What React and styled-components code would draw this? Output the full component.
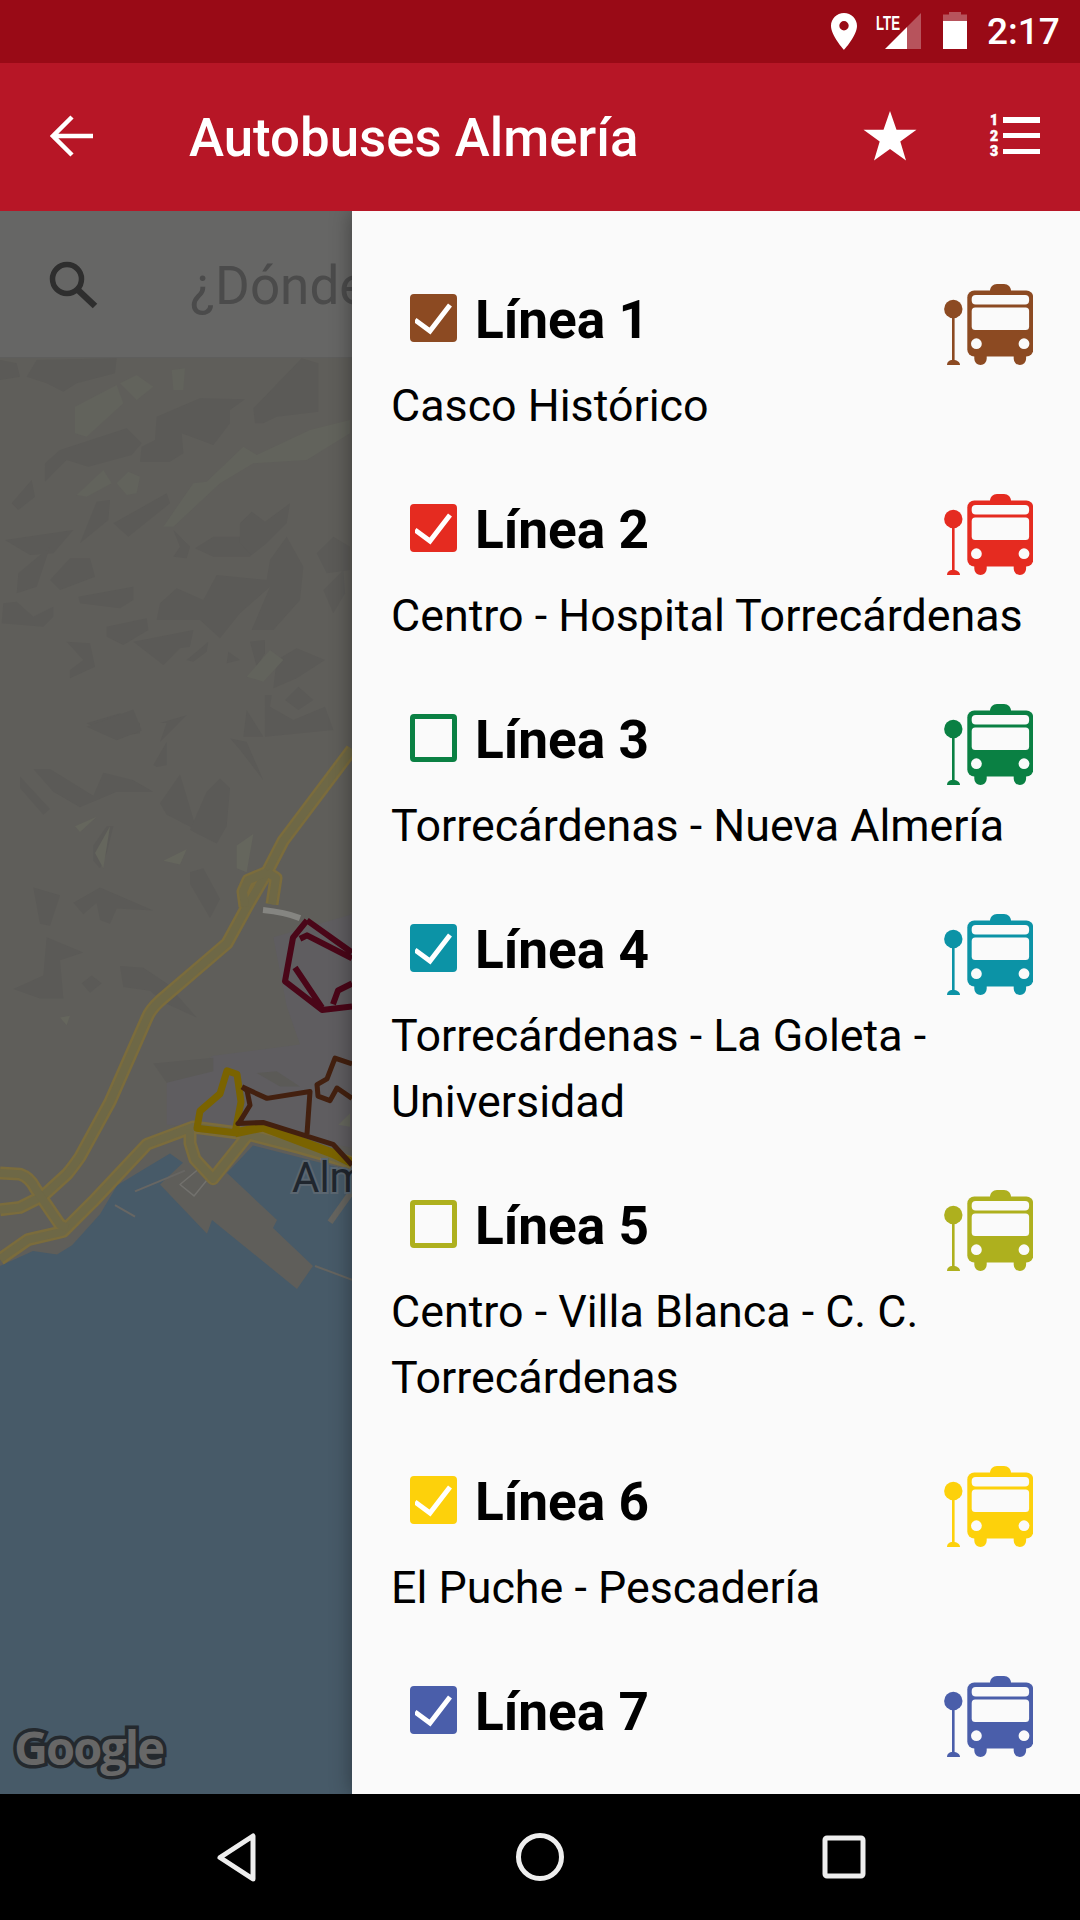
import React from "react";
import styled, { createGlobalStyle } from "styled-components";

const Global = createGlobalStyle`
  html, body { margin: 0; padding: 0; background: #000; }
  #root { width: 1080px; height: 1920px; overflow: hidden; }
  * { box-sizing: border-box; }
`;

const Screen = styled.div`
  width: 1080px;
  height: 1920px;
  display: flex;
  flex-direction: column;
  font-family: Roboto, "Liberation Sans", sans-serif;
  overflow: hidden;
`;

const StatusBar = styled.div`
  height: 63px;
  background: #990a16;
  display: flex;
  align-items: center;
  justify-content: flex-end;
  padding-right: 17px;
  color: #fff;
`;

const StatusIcons = styled.svg`
  width: 140px;
  height: 63px;
  display: block;
`;

const Clock = styled.span`
  margin-left: 16px;
  font-size: 37px;
  font-weight: 500;
  width: 76px;
`;

const AppBar = styled.header`
  height: 148px;
  background: #b71626;
  display: flex;
  align-items: center;
  color: #fff;
  position: relative;
  z-index: 3;
`;

const BackIcon = styled.svg`
  width: 44px;
  height: 44px;
  margin-left: 50px;
  margin-top: -2px;
  flex: none;
`;

const AppTitle = styled.h1`
  margin: 2px 0 0 95px;
  flex: 1;
  font-size: 52.8px;
  font-weight: 500;
  line-height: 1;
`;

const StarIcon = styled.svg`
  width: 54px;
  height: 50px;
  flex: none;
  margin-top: -2px;
`;

const ListIcon = styled.svg`
  width: 52px;
  height: 44px;
  margin: -2px 39px 0 72px;
  flex: none;
  overflow: visible;
`;

const Body = styled.main`
  flex: 1;
  min-height: 0;
  display: flex;
`;

const MapPane = styled.section`
  width: 352px;
  flex: none;
  display: flex;
  flex-direction: column;
  position: relative;
  overflow: hidden;
`;

const SearchBar = styled.div`
  height: 147px;
  flex: none;
  background: #666665;
  border-bottom: 1px solid #5e5e5d;
  display: flex;
  align-items: center;
  padding: 0 0 0 48px;
  white-space: nowrap;
`;

const SearchIcon = styled.svg`
  width: 50px;
  height: 50px;
  flex: none;
  margin-top: 2px;
`;

const SearchText = styled.span`
  margin-left: 92px;
  font-size: 53px;
  font-weight: 400;
  color: #4b4b4b;
  margin-top: 3px;
`;

const MapCanvas = styled.svg`
  flex: 1;
  min-height: 0;
  width: 352px;
  display: block;
`;

const GoogleMark = styled.span`
  position: absolute;
  left: 14px;
  bottom: 15px;
  font-family: "Open Sans", Roboto, sans-serif;
  font-size: 47px;
  font-weight: 700;
  letter-spacing: -2px;
  color: #676767;
  -webkit-text-stroke: 7px #24292e;
  paint-order: stroke fill;
`;

const Drawer = styled.aside`
  flex: 1;
  min-width: 0;
  background: #fafafa;
  padding-top: 45px;
  overflow: hidden;
  position: relative;
  z-index: 2;
  box-shadow: 0 0 20px rgba(0, 0, 0, 0.38);
`;

const LineRow = styled.article`
  padding: 28px 47px 27px 39px;
`;

const LineHead = styled.div`
  height: 89px;
  display: flex;
  align-items: flex-start;
  padding-left: 19px;
`;

const Box = styled.span`
  width: 47px;
  height: 48px;
  flex: none;
  margin-top: 10px;
  border-radius: 4px;
  border: 5px solid ${(p) => p.$color};
  background: ${(p) => (p.$checked ? p.$color : "transparent")};
  display: flex;
  align-items: center;
  justify-content: center;
`;

const CheckMark = styled.svg`
  width: 37px;
  height: 38px;
  display: block;
`;

const LineName = styled.h2`
  margin: 8px 0 0 18px;
  flex: 1;
  font-size: 53.2px;
  font-weight: 700;
  line-height: 56px;
  color: #000;
`;

const BusIcon = styled.svg`
  width: 89px;
  height: 81px;
  flex: none;
  color: ${(p) => p.$color};
`;

const LineDesc = styled.p`
  margin: 0;
  font-size: 44.8px;
  font-weight: 400;
  line-height: 66px;
  color: #000;
`;

const NavBar = styled.nav`
  height: 126px;
  flex: none;
  background: #000;
  display: flex;
  align-items: center;
  justify-content: center;
  gap: 244px;
`;

const NavIcon = styled.svg`
  width: 60px;
  height: 60px;
  flex: none;
`;

const Bus = ({ color }) => (
  <BusIcon $color={color} viewBox="24 14 89 81" aria-hidden="true">
    <g fill="currentColor">
      <circle cx="33.3" cy="39" r="9.2" />
      <rect x="32" y="46" width="2.6" height="46" />
      <path d="M27 95c0-3 2-5 6-5s7 2 7 5z" />
      <path d="M70 21c0-4 3-7 7-7h7c4 0 7 3 7 7z" />
      <rect x="47.3" y="20.5" width="66" height="66" rx="7" />
      <path d="M54.3 84h12.4v4.8a6.2 6.2 0 0 1-12.4 0zM93.7 84h12.4v4.8a6.2 6.2 0 0 1-12.4 0z" />
    </g>
    <g fill="#fafafa">
      <rect x="51.7" y="25" width="57.4" height="9.4" rx="4" />
      <rect x="51.7" y="37.4" width="57.4" height="22.6" rx="3.5" />
      <circle cx="56.4" cy="73.7" r="5.4" />
      <circle cx="104" cy="73.7" r="5.4" />
    </g>
  </BusIcon>
);

const DARK_A = [
  "0,60 50,70 60,110 0,120", "110,60 350,55 345,100 230,130 190,155 140,130 80,110",
  "470,230 600,175 735,178 690,210 690,250 640,315 545,280 550,340 510,365 420,365 425,320 465,300",
  "760,205 905,55 955,70 955,215 830,230 790,250 765,250", "135,425 135,370 180,330 380,265 425,310 395,345 265,380 200,360",
  "35,490 95,420 105,470 55,510", "240,610 290,485 330,480 325,540", "340,550 500,460 510,490 385,590",
  "15,600 220,570 160,640 90,645", "50,760 55,700 150,620 110,740", "150,720 210,655 270,655 285,710 180,750",
  "520,570 570,620 560,655 520,650 540,620", "585,625 640,590 720,590 790,600 750,650 640,650",
  "720,550 755,515 795,545 870,490 860,550 800,610 755,645 720,610",
  "470,840 480,790 530,745 610,780 650,705 800,720 810,660 860,590 910,680 900,780 820,870 755,870 810,740 720,820 660,895 600,840",
  "235,770 400,740 400,780 360,805 240,790", "5,850 10,790 50,785 100,830 160,800 160,830 130,860",
  "320,860 440,835 445,870 370,915 320,890", "400,905 580,870 570,920 540,925 490,975",
  "200,905 270,910 285,980 210,1015 210,990 250,960", "560,960 625,905 620,935 580,965", "680,970 685,935 720,960",
  "750,905 795,900 795,940 770,980", "820,1045 830,960 890,925 975,960 890,1015", "855,1080 895,1040 940,1080 895,1110",
  "795,1065 815,1065 810,1100 880,1140 975,1100 1000,1170 795,1190", "950,640 1000,590 1050,620 1050,690 980,700",
  "970,750 1030,690 1035,760 1000,820", "360,1120 420,1150 420,1180 340,1190 260,1150", "740,1110 790,1190 730,1190",
];
const LIGHT_A = [
  "225,200 350,135 370,190 260,290 225,280", "360,130 410,105 460,140 410,180", "515,90 555,85 550,150 520,150",
  "230,465 310,390 335,430 260,470", "350,430 385,395 420,410 410,460 380,465",
  "490,560 580,430 620,425 730,320 770,345 930,270 1050,240 1050,280 920,360 760,370 660,430 520,560",
  "740,1010 810,930 850,960 790,1025",
];
const DARK_B = [
  "260,70 400,25 425,80 350,105", "100,180 150,180 280,250 310,190 400,210 460,240 350,240 240,280 160,240",
  "60,200 150,285 130,300 60,230", "480,60 560,40 480,110 500,60", "460,170 500,110 500,170 470,175",
  "480,270 540,195 590,340 500,300", "620,240 660,205 690,230 680,330 650,375 570,340", "100,490 180,510 150,590 120,585",
  "140,620 250,660 180,680 190,780 120,780 40,755 130,720", "280,380 320,330 340,330 320,400 300,440 280,420",
  "300,490 460,550 350,545 330,585 300,575 290,530 250,560 220,530", "245,740 275,720 305,740 270,765",
  "360,695 430,700 500,740 590,830 490,790 450,760 370,750", "460,950 640,935 640,970 500,1000",
  "570,450 610,440 660,520 630,570 570,480", "690,100 740,110 790,210 720,130", "770,975 830,970 900,1010 840,1010",
];
const LIGHT_B = [
  "225,330 290,305 240,345", "285,400 330,330 310,440", "490,420 560,390 540,430", "710,380 760,350 740,450 710,440",
  "180,830 210,825 200,850", "1015,1110 1050,1080 1050,1115",
];

const ROADS = [
  "M352 743L283 823L267 850L247 880L227 912L160 962Q150 970 147 977L110 1050L80 1098Q72 1108 67 1113L43 1132L20 1142L0 1144",
  "M0 1187L28 1170L63 1163L93 1137L147 1087L193 1072L247 1078L300 1090L352 1103",
  "M0 1112L20 1113Q30 1116 35 1125L60 1157L68 1160",
  "M245 880L243 867L248 857L267 850M267 850L276 855L272 878",
  "M190 1074L190 1086L195 1100L213 1117L247 1080",
];

const Map = () => (
  <MapCanvas viewBox="0 358 352 1436" aria-hidden="true">
    <rect x="0" y="358" width="352" height="1436" fill="#5f5e5a" />
    <g transform="translate(0 340) scale(.33333)">
      {DARK_A.map((p) => <polygon key={p} points={p} fill="#5b5a57" />)}
      {LIGHT_A.map((p) => <polygon key={p} points={p} fill="#62635c" />)}
    </g>
    <g transform="translate(0 700) scale(.33333 .38265)">
      <polygon points="820,620 1056,560 1056,1170 760,1120 500,1110 500,1000 640,930 900,900 860,800" fill="#5f5d60" />
      {DARK_B.map((p) => <polygon key={p} points={p} fill="#5b5a57" />)}
      {LIGHT_B.map((p) => <polygon key={p} points={p} fill="#65665d" />)}
    </g>
    <g transform="translate(0 700) scale(1 1.148) translate(0 -700)">
      <polygon
        points="0,1193 33,1180 57,1183 72,1175 100,1148 117,1123 147,1107 170,1095 183,1103 160,1122 207,1165 212,1153 297,1213 313,1193 273,1160 277,1153 227,1112 253,1088 352,1110 352,1794 0,1794"
        fill="#475a68"
      />
      <g fill="none" strokeLinejoin="round">
        <path d="M135 1128L185 1110M115 1140L135 1150" stroke="#676663" strokeWidth="2" vectorEffect="non-scaling-stroke" />
        <path d="M330 1155L352 1128" stroke="#65645f" strokeWidth="6" vectorEffect="non-scaling-stroke" />
        <path d="M315 1193L352 1205" stroke="#65645f" strokeWidth="2" vectorEffect="non-scaling-stroke" />
        <path d="M180 1122L198 1109L208 1117L194 1132Z" stroke="#72716d" strokeWidth="1.5" vectorEffect="non-scaling-stroke" />
        <path d="M263 883Q285 885 300 890" stroke="#858581" strokeWidth="6" vectorEffect="non-scaling-stroke" />
        {ROADS.map((d) => <path key={d} d={d} stroke="#7b6c3c" strokeWidth="13" vectorEffect="non-scaling-stroke" />)}
        {ROADS.map((d) => <path key={d} d={d} stroke="#6e6846" strokeWidth="8" vectorEffect="non-scaling-stroke" />)}
        <path d="M307 892L352 920M307 892L293 907L285 945L322 970L352 967M300 908L307 905L352 925M295 933L322 968M333 965L338 953L352 947" stroke="#4a0618" strokeWidth="6" vectorEffect="non-scaling-stroke" />
        <path d="M235 1077L263 1072L333 1095L352 1103" stroke="#7a6300" strokeWidth="9" vectorEffect="non-scaling-stroke" />
        <path d="M227 1023L237 1026L241 1050L235 1077L197 1073L200 1058L220 1043Z" stroke="#7a6300" strokeWidth="7" vectorEffect="non-scaling-stroke" />
        <path d="M242 1037L267 1047L310 1041L307 1078M240 1067L250 1053L247 1040L242 1037M240 1067L238 1069L263 1068L333 1087L352 1105" stroke="#43200f" strokeWidth="5" vectorEffect="non-scaling-stroke" />
        <path d="M352 1017L335 1012L327 1030L317 1035L318 1045L330 1049L337 1038L352 1047" stroke="#43200f" strokeWidth="5" vectorEffect="non-scaling-stroke" />
      </g>
    </g>
    <text
      x="292" y="1192" fontFamily="Roboto, sans-serif" fontSize="42" fill="#20262e"
      stroke="#5b6670" strokeWidth="4" paintOrder="stroke fill"
    >Almería</text>
  </MapCanvas>
);

const LINES = [
  { n: 1, color: "#8c4a22", checked: true, desc: "Casco Histórico" },
  { n: 2, color: "#e52b20", checked: true, desc: "Centro - Hospital Torrecárdenas" },
  { n: 3, color: "#0a8043", checked: false, desc: "Torrecárdenas - Nueva Almería" },
  { n: 4, color: "#0c93a6", checked: true, desc: "Torrecárdenas - La Goleta - Universidad" },
  { n: 5, color: "#aeb01e", checked: false, desc: "Centro - Villa Blanca - C. C. Torrecárdenas" },
  { n: 6, color: "#fdd10b", checked: true, desc: "El Puche - Pescadería" },
  { n: 7, color: "#4a5eaa", checked: true, desc: "" },
];

export default function App() {
  return (
    <Screen>
      <Global />
      <StatusBar>
        <StatusIcons viewBox="0 0 140 63" aria-hidden="true">
          <path fillRule="evenodd" fill="#fff" d="M13 13c-7.200 0-13 5.800-13 13 0 9.500 13 24 13 24s13-14.500 13-24c0-7.200-5.800-13-13-13zm0 17.500a4.700 4.700 0 1 1 0-9.400 4.700 4.700 0 0 1 0 9.400z" />
          <text x="45" y="30" fill="#fff" fontFamily="'Liberation Sans', sans-serif" fontWeight="700" fontSize="20" textLength="24" lengthAdjust="spacingAndGlyphs">LTE</text>
          <path fill="#fff" d="M54 49L76 27V49Z" />
          <path fill="#fff" opacity=".3" d="M76 27L90 13V49H76Z" />
          <path fill="#fff" opacity=".3" d="M112 21V14.500h6V12h12v2.500h6V21Z" />
          <rect x="112" y="21" width="24" height="28" fill="#fff" />
        </StatusIcons>
        <Clock>2:17</Clock>
      </StatusBar>
      <AppBar>
        <BackIcon viewBox="0 0 44 44" aria-hidden="true">
          <path d="M43 22H4M22 3L3 22l19 19" fill="none" stroke="#fff" strokeWidth="4.500" />
        </BackIcon>
        <AppTitle>Autobuses Almería</AppTitle>
        <StarIcon viewBox="0 0 54 50" aria-hidden="true">
          <path fill="#fff" d="M27 0l6.500 18.800H53.500L37.300 30.500 43 49.500 27 38 11 49.500l5.700-19L.5 18.800h20z" />
        </StarIcon>
        <ListIcon viewBox="0 0 52 44" aria-hidden="true">
          <g fill="#fff">
            <rect x="14" y="3" width="37" height="6" />
            <rect x="14" y="19" width="37" height="5" />
            <rect x="14" y="35" width="37" height="5" />
            <g fontFamily="Roboto, sans-serif" fontWeight="900" fontSize="14" stroke="#fff" strokeWidth=".5">
              <text x="1" y="11">1</text>
              <text x="1" y="26.500">2</text>
              <text x="1" y="42">3</text>
            </g>
          </g>
        </ListIcon>
      </AppBar>
      <Body>
        <MapPane>
          <SearchBar>
            <SearchIcon viewBox="0 0 50 50" aria-hidden="true">
              <circle cx="19" cy="19" r="14.500" fill="none" stroke="#2e2e2e" strokeWidth="5.500" />
              <path d="M30 30l17 16" stroke="#2e2e2e" strokeWidth="6.500" />
            </SearchIcon>
            <SearchText>¿Dónde vas?</SearchText>
          </SearchBar>
          <Map />
          <GoogleMark>Google</GoogleMark>
        </MapPane>
        <Drawer>
          {LINES.map((l) => (
            <LineRow key={l.n}>
              <LineHead>
                <Box $color={l.color} $checked={l.checked}>
                  {l.checked && (
                    <CheckMark viewBox="0 0 37 38" aria-hidden="true">
                      <path d="M0 21l15 11L35 6" fill="none" stroke="#fff" strokeWidth="5" />
                    </CheckMark>
                  )}
                </Box>
                <LineName>Línea {l.n}</LineName>
                <Bus color={l.color} />
              </LineHead>
              {l.desc && <LineDesc>{l.desc}</LineDesc>}
            </LineRow>
          ))}
        </Drawer>
      </Body>
      <NavBar>
        <NavIcon viewBox="0 0 60 60" aria-hidden="true">
          <path d="M47 9v43L14 30.500z" fill="none" stroke="#eee" strokeWidth="5" strokeLinejoin="round" />
        </NavIcon>
        <NavIcon viewBox="0 0 60 60" aria-hidden="true">
          <circle cx="30" cy="30" r="21.500" fill="none" stroke="#eee" strokeWidth="5" />
        </NavIcon>
        <NavIcon viewBox="0 0 60 60" aria-hidden="true">
          <rect x="11" y="11" width="38" height="38" rx="2" fill="none" stroke="#eee" strokeWidth="5" />
        </NavIcon>
      </NavBar>
    </Screen>
  );
}
